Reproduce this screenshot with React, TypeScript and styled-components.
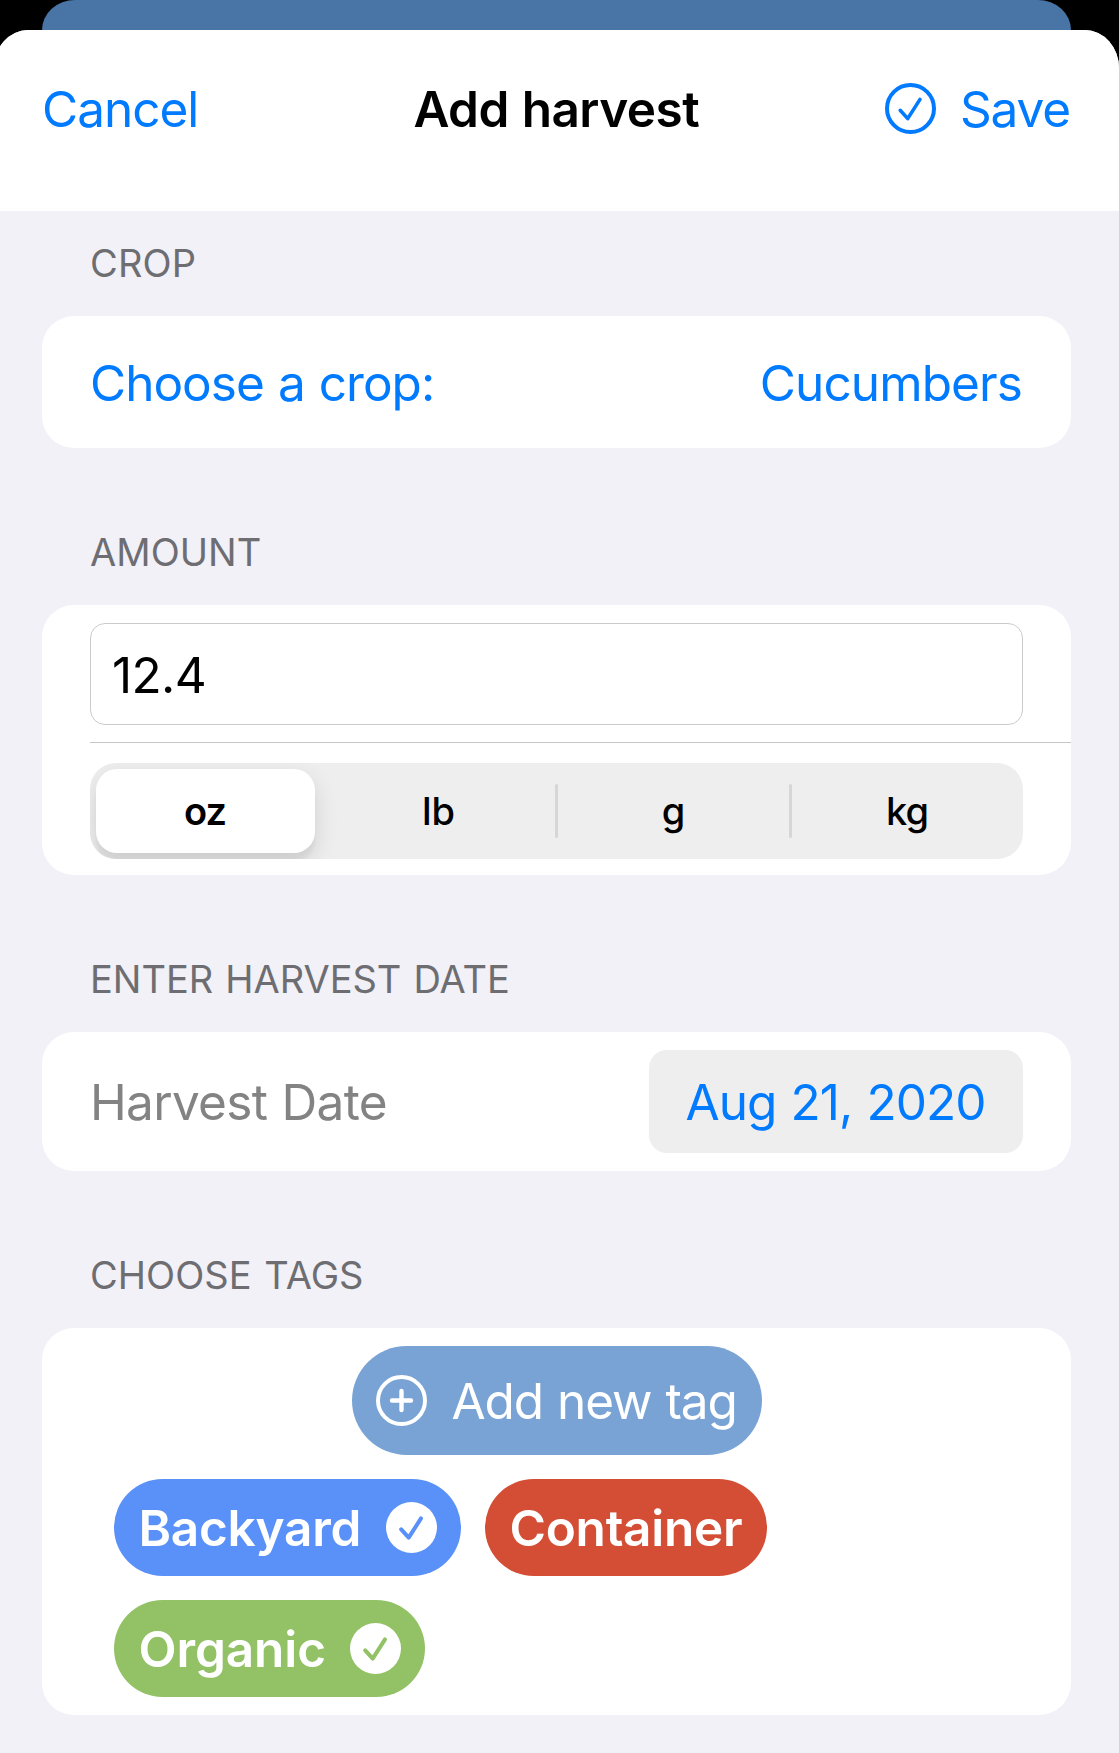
import React, { useState } from "react";
import styled, { createGlobalStyle } from "styled-components";

const BLUE = "#007aff";

const GlobalStyle = createGlobalStyle`
  * { box-sizing: border-box; }
  body {
    margin: 0;
    background: #000;
    font-family: Inter, "Liberation Sans", sans-serif;
  }
  button, input { font: inherit; border: 0; padding: 0; margin: 0; background: none; }
`;

const Screen = styled.div`
  width: 1119px;
  height: 1753px;
  overflow: hidden;
  display: flex;
  flex-direction: column;
  background: #000;
`;

const BackSheet = styled.div`
  flex: none;
  height: 30px;
  margin: 0 48px 0 42px;
  background: #4974a6;
  border-radius: 33px 33px 0 0 / 30px 30px 0 0;
`;

const Sheet = styled.main`
  flex: 1;
  margin-left: -6px;
  border-radius: 34px 34px 0 0 / 38px 38px 0 0;
  overflow: hidden;
  background: #f2f1f7;
`;

const NavBar = styled.header`
  height: 181px;
  padding: 0 48px 23px;
  display: grid;
  grid-template-columns: 1fr auto 1fr;
  align-items: center;
  background: #fff;
`;

const Text = styled.span<{
  $track?: number;
  $space?: number;
  $size?: number;
  $weight?: number;
  $color?: string;
}>`
  font-size: ${(p) => p.$size ?? 49.5}px;
  font-weight: ${(p) => p.$weight ?? 400};
  letter-spacing: ${(p) => p.$track ?? 0}px;
  word-spacing: ${(p) => p.$space ?? 1.2}px;
  margin-right: ${(p) => -(p.$track ?? 0)}px;
  color: ${(p) => p.$color ?? "inherit"};
  line-height: 60px;
  white-space: nowrap;
`;

const NavButton = styled.button<{ $end?: boolean }>`
  display: flex;
  align-items: center;
  gap: 24px;
  justify-self: ${(p) => (p.$end ? "end" : "start")};
  color: ${BLUE};

  svg { margin-bottom: 1px; }
`;

const Form = styled.div`
  padding: 0 48px;
`;

const SectionTitle = styled.h2<{ $height: number }>`
  margin: 0;
  height: ${(p) => p.$height}px;
  padding: 0 48px 23px;
  display: flex;
  align-items: flex-end;
  color: #6d6d72;
`;

const Card = styled.section`
  border-radius: 32px;
  background: #fff;
  overflow: hidden;
`;

const Row = styled.div<{ $height: number }>`
  height: ${(p) => p.$height}px;
  padding: 0 48px;
  display: flex;
  align-items: center;
  justify-content: space-between;
`;

const CropRow = styled(Row)`
  padding-top: 2px;
  color: ${BLUE};
`;

const AmountRow = styled.div`
  padding: 18px 48px 17px;
`;

const AmountInput = styled.input`
  display: block;
  width: 100%;
  height: 102px;
  padding: 2px 21px 0;
  border: 1px solid #cacaca;
  border-radius: 15px;
  background: #fff;
  color: #000;
  font-size: 49.5px;
  letter-spacing: -0.6px;
  outline: none;
`;

const Divider = styled.div`
  height: 1px;
  margin-left: 48px;
  background: #c6c6c8;
`;

const SegmentRow = styled.div`
  padding: 20px 48px 16px;
`;

const Segments = styled.div`
  height: 96px;
  padding: 6px;
  display: grid;
  grid-template-columns: 219px 3px 1fr 3px 1fr 3px 219px;
  column-gap: 6px;
  align-items: center;
  border-radius: 26px;
  overflow: hidden;
  background: #eeeeee;
`;

const Segment = styled.button<{ $on: boolean }>`
  height: 84px;
  border-radius: 21px;
  background: ${(p) => (p.$on ? "#fff" : "transparent")};
  box-shadow: ${(p) => (p.$on ? "0 9px 24px rgba(0,0,0,.12), 0 9px 3px rgba(0,0,0,.04)" : "none")};
  color: #000;

  &:nth-of-type(2) { padding-right: 2px; }
`;

const SegmentRule = styled.i<{ $hidden: boolean }>`
  height: 54px;
  border-radius: 2px;
  background: ${(p) => (p.$hidden ? "transparent" : "#d6d6d6")};
`;

const DateButton = styled.button`
  width: 374px;
  height: 103px;
  border-radius: 18px;
  background: #eeeeee;
  color: ${BLUE};
`;

const TagArea = styled.div`
  height: 387px;
  padding: 18px 72px;
  display: flex;
  flex-direction: column;
  gap: 24px;
`;

const AddTag = styled.button`
  align-self: center;
  width: 410px;
  height: 109px;
  padding-left: 24px;
  border-radius: 55px;
  display: flex;
  align-items: center;
  gap: 25px;
  background: #7aa3d5;
  color: #fff;
`;

const TagRow = styled.div`
  display: flex;
  gap: 24px;
`;

const Tag = styled.button<{ $fill: string; $width: number }>`
  width: ${(p) => p.$width}px;
  height: 97px;
  padding: 0 24px 0 24.5px;
  border-radius: 49px;
  display: flex;
  align-items: center;
  justify-content: space-between;
  background: ${(p) => p.$fill};
  color: #fff;
`;

const Icon = styled.svg`
  flex: none;
  width: 51px;
  height: 51px;
  display: block;
  fill: none;
  stroke-linecap: round;
  stroke-linejoin: round;
`;

const CHECK = "M15.2 27.3 L22.7 35.6 L35 16.4";

const CheckCircle = () => (
  <Icon viewBox="0 0 51 51" stroke="currentColor">
    <circle cx="25.5" cy="25.5" r="23.5" strokeWidth="4" />
    <path d={CHECK} strokeWidth="3.6" />
  </Icon>
);

const CheckCircleFill = ({ mark }: { mark: string }) => (
  <Icon viewBox="0 0 51 51">
    <circle cx="25.5" cy="25.5" r="25.5" fill="#fff" />
    <path d={CHECK} stroke={mark} strokeWidth="4" />
  </Icon>
);

const PlusCircle = () => (
  <Icon viewBox="0 0 51 51" stroke="currentColor">
    <circle cx="25.5" cy="25.5" r="23.5" strokeWidth="4" />
    <path d="M25.5 16v19M16 25.5h19" strokeWidth="4.4" />
  </Icon>
);

const UNITS = [
  { name: "oz", track: -0.8 },
  { name: "lb", track: 0 },
  { name: "g", track: 0 },
  { name: "kg", track: -0.8 },
];

type TagInfo = { name: string; fill: string; width: number; track: number; checked: boolean };

const TAG_ROWS: TagInfo[][] = [
  [
    { name: "Backyard", fill: "#5991f8", width: 347, track: -0.3, checked: true },
    { name: "Container", fill: "#d44e36", width: 282, track: -0.25, checked: false },
  ],
  [{ name: "Organic", fill: "#93c166", width: 311, track: -0.1, checked: true }],
];

export default function App() {
  const [amount, setAmount] = useState("12.4");
  const [unit, setUnit] = useState(0);

  return (
    <>
      <GlobalStyle />
      <Screen>
        <BackSheet />
        <Sheet>
          <NavBar>
            <NavButton>
              <Text $track={-1}>Cancel</Text>
            </NavButton>
            <Text $weight={600} $track={-0.55} $space={1}>Add harvest</Text>
            <NavButton $end>
              <CheckCircle />
              <Text $track={-1.2}>Save</Text>
            </NavButton>
          </NavBar>
          <Form>
            <SectionTitle $height={105}>
              <Text $size={38} $track={0.2}>CROP</Text>
            </SectionTitle>
            <Card>
              <CropRow $height={132}>
                <Text $track={-1}>Choose a crop:</Text>
                <Text $track={-0.87}>Cucumbers</Text>
              </CropRow>
            </Card>
            <SectionTitle $height={157}>
              <Text $size={38} $track={0.05}>AMOUNT</Text>
            </SectionTitle>
            <Card>
              <AmountRow>
                <AmountInput value={amount} onChange={(e) => setAmount(e.target.value)} />
              </AmountRow>
              <Divider />
              <SegmentRow>
                <Segments>
                  {UNITS.map((u, i) => (
                    <React.Fragment key={u.name}>
                      {i > 0 && <SegmentRule $hidden={unit === i || unit === i - 1} />}
                      <Segment $on={unit === i} onClick={() => setUnit(i)}>
                        <Text $size={38} $weight={unit === i ? 600 : 500} $track={u.track}>
                          {u.name}
                        </Text>
                      </Segment>
                    </React.Fragment>
                  ))}
                </Segments>
              </SegmentRow>
            </Card>
            <SectionTitle $height={157}>
              <Text $size={38} $track={-0.03} $space={1.5}>ENTER HARVEST DATE</Text>
            </SectionTitle>
            <Card>
              <Row $height={139}>
                <Text $color="#838383" $track={-0.7}>Harvest Date</Text>
                <DateButton>
                  <Text $track={-0.95}>Aug 21, 2020</Text>
                </DateButton>
              </Row>
            </Card>
            <SectionTitle $height={157}>
              <Text $size={38} $track={0.05} $space={2}>CHOOSE TAGS</Text>
            </SectionTitle>
            <Card>
              <TagArea>
                <AddTag>
                  <PlusCircle />
                  <Text $weight={370} $track={-1.1}>Add new tag</Text>
                </AddTag>
                {TAG_ROWS.map((row, i) => (
                  <TagRow key={i}>
                    {row.map((t) => (
                      <Tag key={t.name} $fill={t.fill} $width={t.width}>
                        <Text $weight={600} $track={t.track}>{t.name}</Text>
                        {t.checked && <CheckCircleFill mark={t.fill} />}
                      </Tag>
                    ))}
                  </TagRow>
                ))}
              </TagArea>
            </Card>
          </Form>
        </Sheet>
      </Screen>
    </>
  );
}
